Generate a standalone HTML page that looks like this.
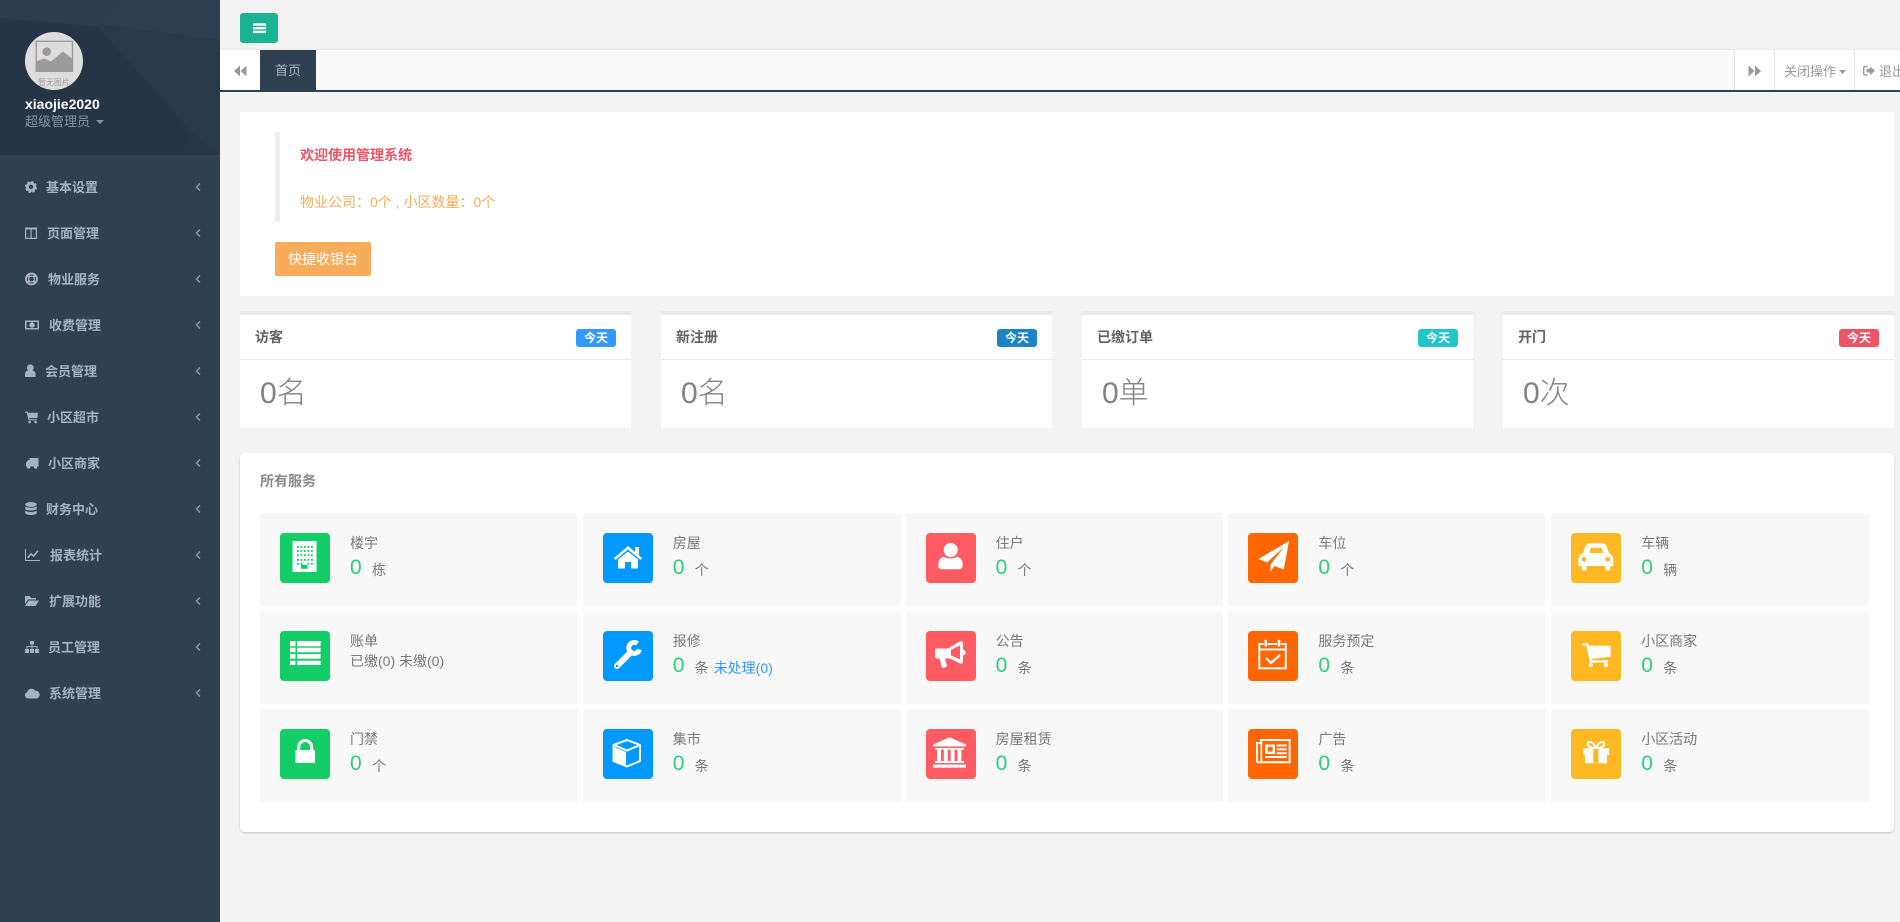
<!DOCTYPE html>
<html lang="zh"><head><meta charset="utf-8"><title>首页</title>
<style>
*{box-sizing:border-box}
html,body{margin:0;padding:0;width:1900px;height:922px;overflow:hidden;background:#f3f3f4;font-family:"Liberation Sans","Noto Sans CJK SC",sans-serif;font-size:14px;color:#676a6c}
.a{position:absolute;white-space:nowrap}
.t{line-height:20px;height:20px}
#side{position:absolute;left:0;top:0;width:220px;height:922px;background:#2f4050}
.n{position:absolute;left:0;width:220px;height:46px}
.n svg.i{position:absolute;left:25px;top:15px;fill:#a7b1c2;overflow:visible}
.n span{position:absolute;top:14px;line-height:20px;font-size:13px;font-weight:700;color:#a7b1c2}
.n svg.c{position:absolute;left:195px;top:19px}
.card{position:absolute;top:311px;width:391px;height:117px;background:#fff;border-top:4px solid #e7eaec}
.card .h{position:absolute;left:0;right:0;top:0;height:45px;border-bottom:1px solid #e7eaec}
.card b{position:absolute;left:15px;top:12px;line-height:20px;font-size:14px;color:#5f6264}
.card i{position:absolute;right:15px;top:14px;width:40px;height:18px;border-radius:3px;color:#fff;font:700 12px/18px "Liberation Sans","Noto Sans CJK SC",sans-serif;text-align:center}
.card u{position:absolute;left:20px;top:59px;text-decoration:none;font-size:30px;line-height:40px;font-weight:300;color:#808284}
#grid{position:absolute;left:260px;top:513px;width:1609px;display:grid;grid-template-columns:repeat(5,317.8px);grid-auto-rows:93px;gap:5px}
.it{position:relative;background:#f8f8f8}
.it svg{position:absolute;left:20px;top:20px;width:50px;height:50px;border-radius:4px}
.it .l{position:absolute;left:90px;top:20px;line-height:20px;color:#777;white-space:nowrap}
.it .v{position:absolute;left:90px;top:42px;line-height:26px;font-size:21px;color:#2ccf78}
.it .u{position:absolute;left:112px;top:47px;line-height:20px;color:#777;white-space:nowrap}
.g{background:#13ce66}.b{background:#09f}.r{background:#ff5b62}.o{background:#f60}.y{background:#ffb822}
</style></head><body>

<div id="side">
<svg class="a" style="left:0;top:0" width="220" height="155" viewBox="0 0 220 155">
<rect width="220" height="155" fill="#263646"/>
<polygon points="0,0 120,0 98,27 0,18" fill="#2a3c4d"/>
<polygon points="120,0 220,0 220,130 196,135 98,27" fill="#283a4a"/>
<polygon points="120,0 220,0 220,40 100,24" fill="#2b3d4e"/>
<polygon points="220,110 196,135 220,155" fill="#283a4a"/>
<polygon points="0,18 98,27 190,135 180,155 0,155" fill="#263545"/>
</svg>
<svg class="a" style="left:25px;top:32px" width="58" height="58" viewBox="0 0 58 58">
<circle cx="29" cy="29" r="29" fill="#dedcdc"/>
<rect x="11.2" y="9.3" width="36.3" height="30" fill="none" stroke="#9b9b9b" stroke-width="1.4"/>
<circle cx="21.7" cy="19.7" r="4.3" fill="#9b9b9b"/>
<polygon points="11,29.5 19,26.5 26,29.5 38,19.5 48,27.5 48,39.7 11,39.7" fill="#9b9b9b"/>
<text x="29" y="53" text-anchor="middle" font-size="7.8" fill="#9f9f9f" font-family="Liberation Sans,Noto Sans CJK SC,sans-serif">暂无图片</text>
</svg>
<div class="a t" style="left:25px;top:94px;color:#fff;font-weight:700;font-size:14px">xiaojie2020</div>
<div class="a t" style="left:25px;top:112px;color:#8095a8;font-size:13px">超级管理员</div>
<svg class="a" style="left:96px;top:120px" width="8" height="5"><polygon points="0,0 8,0 4,4" fill="#8095a8"/></svg>

<div class="n" style="top:164px"><svg class="i" width="16" height="16"><circle cx="6" cy="8" r="3.6" fill="none" stroke="#a7b1c2" stroke-width="2.8"/><circle cx="6" cy="8" r="5.2" fill="none" stroke="#a7b1c2" stroke-width="1.6" stroke-dasharray="2.4 1.7"/></svg><span style="left:46px">基本设置</span><svg class="c" width="6" height="8"><polyline points="5,.5 1.5,4 5,7.5" fill="none" stroke="#8a9bb0" stroke-width="1.4"/></svg></div>

<div class="n" style="top:210px"><svg class="i" width="16" height="16"><path d="M0 2.5H12V14H0ZM1.2 4.5V12.8H5.4V4.5ZM6.6 4.5V12.8H10.8V4.5Z" fill-rule="evenodd"/></svg><span style="left:47px">页面管理</span><svg class="c" width="6" height="8"><polyline points="5,.5 1.5,4 5,7.5" fill="none" stroke="#8a9bb0" stroke-width="1.4"/></svg></div>

<div class="n" style="top:256px"><svg class="i" width="16" height="16"><circle cx="6.5" cy="8" r="5.5" fill="none" stroke="#a7b1c2" stroke-width="1.9"/><circle cx="6.5" cy="8" r="2.9" fill="none" stroke="#a7b1c2" stroke-width="1.2"/><path d="M2.8 4.3L4.6 6.1M10.2 4.3L8.4 6.1M2.8 11.7L4.6 9.9M10.2 11.7L8.4 9.9" stroke="#a7b1c2" stroke-width="2.4"/></svg><span style="left:48px">物业服务</span><svg class="c" width="6" height="8"><polyline points="5,.5 1.5,4 5,7.5" fill="none" stroke="#8a9bb0" stroke-width="1.4"/></svg></div>

<div class="n" style="top:302px"><svg class="i" width="16" height="16"><path d="M0 3.5H14V12.5H0ZM1.5 5V11H12.5V5ZM7 5.3A2.7 2.7 0 1 1 7 10.7A2.7 2.7 0 1 1 7 5.3Z" fill-rule="evenodd"/><rect x="6.4" y="6.5" width="1.2" height="3"/></svg><span style="left:49px">收费管理</span><svg class="c" width="6" height="8"><polyline points="5,.5 1.5,4 5,7.5" fill="none" stroke="#8a9bb0" stroke-width="1.4"/></svg></div>

<div class="n" style="top:348px"><svg class="i" width="16" height="16"><circle cx="5.3" cy="4.8" r="3.4"/><path d="M0 14V11.5C0 9 1.5 7.6 3 7.6H7.6C9 7.6 10.6 9 10.6 11.5V14Z"/></svg><span style="left:45px">会员管理</span><svg class="c" width="6" height="8"><polyline points="5,.5 1.5,4 5,7.5" fill="none" stroke="#8a9bb0" stroke-width="1.4"/></svg></div>

<div class="n" style="top:394px"><svg class="i" width="16" height="16"><path d="M0 2.5H2.6L3 3.8H13L12.4 9H4.2L4.5 10.2H11.8V11.4H3.5L1.8 3.7H0Z"/><circle cx="4.6" cy="13" r="1.3"/><circle cx="10.6" cy="13" r="1.3"/></svg><span style="left:47px">小区超市</span><svg class="c" width="6" height="8"><polyline points="5,.5 1.5,4 5,7.5" fill="none" stroke="#8a9bb0" stroke-width="1.4"/></svg></div>

<div class="n" style="top:440px"><svg class="i" width="16" height="16"><path d="M4.5 3H13.5V11.5H4.5H1V8L3 5H4.5Z"/><circle cx="3.6" cy="12" r="1.7"/><circle cx="10.6" cy="12" r="1.7"/></svg><span style="left:48px">小区商家</span><svg class="c" width="6" height="8"><polyline points="5,.5 1.5,4 5,7.5" fill="none" stroke="#8a9bb0" stroke-width="1.4"/></svg></div>

<div class="n" style="top:486px"><svg class="i" width="16" height="16"><ellipse cx="6" cy="3.5" rx="5.8" ry="2.4"/><path d="M.2 5.2C1.5 7.2 10.5 7.2 11.8 5.2V8C10.5 10 1.5 10 .2 8Z"/><path d="M.2 9.5C1.5 11.5 10.5 11.5 11.8 9.5V12.3C10.5 14.6 1.5 14.6 .2 12.3Z"/></svg><span style="left:46px">财务中心</span><svg class="c" width="6" height="8"><polyline points="5,.5 1.5,4 5,7.5" fill="none" stroke="#8a9bb0" stroke-width="1.4"/></svg></div>

<div class="n" style="top:532px"><svg class="i" width="16" height="16"><path d="M0 2H1V13H15V14H0Z"/><polyline points="2.5,11 6,7 8.5,9 13,3.8" fill="none" stroke="#a7b1c2" stroke-width="1.6"/></svg><span style="left:50px">报表统计</span><svg class="c" width="6" height="8"><polyline points="5,.5 1.5,4 5,7.5" fill="none" stroke="#8a9bb0" stroke-width="1.4"/></svg></div>

<div class="n" style="top:578px"><svg class="i" width="16" height="16"><path d="M0 3H4.5L6 5H11V6.5H3L0 11Z"/><path d="M3.6 7.5H14L10.6 13H0Z"/></svg><span style="left:49px">扩展功能</span><svg class="c" width="6" height="8"><polyline points="5,.5 1.5,4 5,7.5" fill="none" stroke="#8a9bb0" stroke-width="1.4"/></svg></div>

<div class="n" style="top:624px"><svg class="i" width="16" height="16"><rect x="5" y="2" width="4" height="3.5"/><rect x="0" y="10" width="4" height="4"/><rect x="5" y="10" width="4" height="4"/><rect x="10" y="10" width="4" height="4"/><path d="M6.5 5H7.5V7H12.5V10H11.5V8H7.5V10H6.5V8H2.5V10H1.5V7H6.5Z"/></svg><span style="left:48px">员工管理</span><svg class="c" width="6" height="8"><polyline points="5,.5 1.5,4 5,7.5" fill="none" stroke="#8a9bb0" stroke-width="1.4"/></svg></div>

<div class="n" style="top:670px"><svg class="i" width="16" height="16"><path d="M3 13.5A3.2 3.2 0 0 1 2.3 7.2A4.3 4.3 0 0 1 10.2 5.8A3.9 3.9 0 0 1 11.5 13.5Z"/></svg><span style="left:49px">系统管理</span><svg class="c" width="6" height="8"><polyline points="5,.5 1.5,4 5,7.5" fill="none" stroke="#8a9bb0" stroke-width="1.4"/></svg></div>
</div>

<!-- top -->
<div class="a" style="left:240px;top:13px;width:38px;height:30px;background:#1ab394;border-radius:3px"></div>
<svg class="a" style="left:253px;top:23px" width="13" height="11"><rect y=".3" width="13" height="2.4" fill="#fff"/><rect y="4" width="13" height="2.4" fill="#fff"/><rect y="7.7" width="13" height="2.4" fill="#fff"/></svg>

<div class="a" style="left:220px;top:49px;width:1680px;height:1px;background:#e7e7e7"></div>
<div class="a" style="left:220px;top:50px;width:1680px;height:40px;background:#fafafa"></div>
<div class="a" style="left:220px;top:90px;width:1680px;height:2px;background:#2f4050"></div>
<div class="a" style="left:220px;top:50px;width:40px;height:40px;background:#fff"></div>
<svg class="a" style="left:234px;top:65px" width="13" height="12"><polygon points="6,.5 6,11.5 0,6" fill="#999"/><polygon points="12.5,.5 12.5,11.5 6.5,6" fill="#999"/></svg>
<div class="a t" style="left:260px;top:50px;width:56px;height:40px;background:#2f4050;color:#a7b1c2;font-size:13px;line-height:41px;text-align:center">首页</div>

<div class="a" style="left:1734px;top:50px;width:166px;height:40px;background:#fff"></div>
<div class="a" style="left:1734px;top:50px;width:1px;height:40px;background:#e7e7e7"></div>
<div class="a" style="left:1774px;top:50px;width:1px;height:40px;background:#e7e7e7"></div>
<div class="a" style="left:1854px;top:50px;width:1px;height:40px;background:#e7e7e7"></div>
<svg class="a" style="left:1748px;top:65px" width="13" height="12"><polygon points=".5,.5 .5,11.5 6.5,6" fill="#999"/><polygon points="7,.5 7,11.5 13,6" fill="#999"/></svg>
<div class="a t" style="left:1784px;top:62px;color:#999;font-size:13px">关闭操作</div>
<svg class="a" style="left:1839px;top:70px" width="8" height="5"><polygon points="0,0 7,0 3.5,4" fill="#999"/></svg>
<svg class="a" style="left:1863px;top:65px" width="12" height="12"><path d="M4.5 1.5H2Q.7 1.5 .7 3V8.5Q.7 10 2 10H4.5" fill="none" stroke="#999" stroke-width="1.4"/><path d="M3.5 4H7V1.5L12 5.8L7 10V7.5H3.5Z" fill="#999"/></svg>
<div class="a t" style="left:1879px;top:62px;color:#999;font-size:13px;width:21px;overflow:hidden">退出</div>

<!-- welcome -->
<div class="a" style="left:240px;top:112px;width:1654px;height:184px;background:#fff"></div>
<div class="a" style="left:275px;top:132px;width:5px;height:90px;background:#eee"></div>
<div class="a t" style="left:300px;top:145px;color:#ed5565;font-weight:700">欢迎使用管理系统</div>
<div class="a t" style="left:300px;top:192px;color:#f8ac59">物业公司：0个 , 小区数量：0个</div>
<div class="a" style="left:275px;top:242px;width:96px;height:34px;background:#f8ac59;border-radius:2px;color:#fff;text-align:center;line-height:35px">快捷收银台</div>

<!-- stat cards -->
<div class="card" style="left:240px"><div class="h"></div><b>访客</b><i style="background:#39f">今天</i><u>0名</u></div>
<div class="card" style="left:661px"><div class="h"></div><b>新注册</b><i style="background:#1c84c6">今天</i><u>0名</u></div>
<div class="card" style="left:1082px"><div class="h"></div><b>已缴订单</b><i style="background:#23c6c8">今天</i><u>0单</u></div>
<div class="card" style="left:1503px"><div class="h"></div><b>开门</b><i style="background:#ed5565">今天</i><u>0次</u></div>

<!-- services -->
<div class="a" style="left:240px;top:453px;width:1654px;height:379px;background:#fff;border-radius:5px;box-shadow:0 1px 2px rgba(0,0,0,.2)"></div>
<div class="a t" style="left:260px;top:471px;font-weight:700;color:#8a8a8a">所有服务</div>

<div id="grid">

<div class="it"><svg class="g" viewBox="0 0 50 50"><rect x="12.5" y="8" width="24" height="31" fill="#fff"/><g fill="#13ce66"><rect x="17" y="13" width="1.8" height="1.8"/><rect x="20.5" y="13" width="1.8" height="1.8"/><rect x="24" y="13" width="1.8" height="1.8"/><rect x="27.5" y="13" width="1.8" height="1.8"/><rect x="31" y="13" width="1.8" height="1.8"/><rect x="17" y="17" width="1.8" height="1.8"/><rect x="20.5" y="17" width="1.8" height="1.8"/><rect x="24" y="17" width="1.8" height="1.8"/><rect x="27.5" y="17" width="1.8" height="1.8"/><rect x="31" y="17" width="1.8" height="1.8"/><rect x="17" y="21.3" width="1.8" height="1.8"/><rect x="20.5" y="21.3" width="1.8" height="1.8"/><rect x="24" y="21.3" width="1.8" height="1.8"/><rect x="27.5" y="21.3" width="1.8" height="1.8"/><rect x="31" y="21.3" width="1.8" height="1.8"/><rect x="17" y="26" width="1.8" height="1.8"/><rect x="20.5" y="26" width="1.8" height="1.8"/><rect x="24" y="26" width="1.8" height="1.8"/><rect x="27.5" y="26" width="1.8" height="1.8"/><rect x="31" y="26" width="1.8" height="1.8"/><rect x="17" y="30" width="1.8" height="1.8"/><rect x="20.5" y="30" width="1.8" height="1.8"/><rect x="27.5" y="30" width="1.8" height="1.8"/><rect x="31" y="30" width="1.8" height="1.8"/><rect x="21" y="32" width="6.5" height="3.8"/></g></svg><div class="l">楼宇</div><div class="v">0</div><div class="u">栋</div></div>

<div class="it"><svg class="b" viewBox="0 0 50 50"><path d="M11 25L25 13L32 19V14H36V22.5L39 25L37.5 27L25 16.5L12.5 27Z" fill="#fff"/><path d="M15 26.5L25 18.5L35 26.5V35.5H28V29H22V35.5H15Z" fill="#fff"/></svg><div class="l">房屋</div><div class="v">0</div><div class="u">个</div></div>

<div class="it"><svg class="r" viewBox="0 0 50 50"><circle cx="24.7" cy="17" r="7" fill="#fff"/><path d="M12.3 32C12.3 27 15 24 18 23.7C21 26 28 26 31 23.7C34.5 24 36.7 27 36.7 32Q36.7 36.3 33 36.3H16Q12.3 36.3 12.3 32Z" fill="#fff"/></svg><div class="l">住户</div><div class="v">0</div><div class="u">个</div></div>

<div class="it"><svg class="o" viewBox="0 0 50 50"><path d="M41 8L10.5 26L19 29.5L36 14L22.5 31.5V38.5L26.5 33L35.8 36.5Z" fill="#fff"/></svg><div class="l">车位</div><div class="v">0</div><div class="u">个</div></div>

<div class="it"><svg class="y" viewBox="0 0 50 50"><path d="M12 20L14.5 13Q15.5 10.3 19 10.3H31Q34.5 10.3 35.5 13L38 20Q42.3 22 42.3 27V33H39.5V35Q39.5 37.7 37 37.7Q34.3 37.7 34.3 35V33H15.7V35Q15.7 37.7 13 37.7Q10.5 37.7 10.5 35V33H7.3V27Q7.3 22 12 20Z" fill="#fff"/><path d="M18.3 20L19.7 15H30.7L32.3 20Z" fill="#ffb822"/><circle cx="13" cy="26.3" r="2.4" fill="#ffb822"/><circle cx="36.7" cy="26.3" r="2.4" fill="#ffb822"/></svg><div class="l">车辆</div><div class="v">0</div><div class="u">辆</div></div>

<div class="it"><svg class="g" viewBox="0 0 50 50"><g fill="#fff"><rect x="10" y="10" width="5.5" height="5.3"/><rect x="17" y="10" width="23.6" height="5.3"/><rect x="10" y="16.7" width="5.5" height="4.6"/><rect x="17" y="16.7" width="23.6" height="4.6"/><rect x="10" y="23" width="5.5" height="4.7"/><rect x="17" y="23" width="23.6" height="4.7"/><rect x="10" y="29.7" width="5.5" height="4.3"/><rect x="17" y="29.7" width="23.6" height="4.3"/></g></svg><div class="l">账单</div><div class="l" style="top:40px">已缴(0) 未缴(0)</div></div>

<div class="it"><svg class="b" viewBox="0 0 50 50"><path d="M14 35L27.5 21.5" stroke="#fff" stroke-width="6" stroke-linecap="round"/><path d="M34.5 12.5A5.5 5.5 0 1 0 36.5 18.5" fill="none" stroke="#fff" stroke-width="5"/><circle cx="14" cy="35" r="1.2" fill="#09f"/></svg><div class="l">报修</div><div class="v">0</div><div class="u">条 <span style="color:#39f;margin-left:1px">未处理(0)</span></div></div>

<div class="it"><svg class="r" viewBox="0 0 50 50"><path d="M9 17.5H22L34 10.3Q37 10.3 37 13V18.5Q39.7 19.5 39.7 21.5Q39.7 23.5 37 24.5V30Q37 33 34 32.5L24 27.5H19L21 35L19 36.7H16L13.5 27.5H10.5Q9 27 9 25Z" fill="#fff"/><path d="M25 18.8L34 14.5V28.5L25 24.5Z" fill="#ff5b62"/></svg><div class="l">公告</div><div class="v">0</div><div class="u">条</div></div>

<div class="it"><svg class="o" viewBox="0 0 50 50"><rect x="11.3" y="13" width="26.5" height="24.3" fill="none" stroke="#fff" stroke-width="2"/><rect x="11" y="17.5" width="27" height="2" fill="#fff"/><rect x="16.2" y="8.3" width="3.2" height="7.5" rx="1.6" fill="#fff" stroke="#f60" stroke-width=".6"/><rect x="29.4" y="8.3" width="3.2" height="7.5" rx="1.6" fill="#fff" stroke="#f60" stroke-width=".6"/><polyline points="18,27 23,32 32,24" fill="none" stroke="#fff" stroke-width="2.4"/></svg><div class="l">服务预定</div><div class="v">0</div><div class="u">条</div></div>

<div class="it"><svg class="y" viewBox="0 0 50 50"><path d="M11.3 12.3H17L18 14.7H39.7V25.7L20.5 28L21 29.3H37V31.6H19L15.3 14.5H11.3Z" fill="#fff"/><circle cx="19.7" cy="34" r="2.2" fill="#fff"/><circle cx="35" cy="34" r="2.2" fill="#fff"/></svg><div class="l">小区商家</div><div class="v">0</div><div class="u">条</div></div>

<div class="it"><svg class="g" viewBox="0 0 50 50"><path d="M18.7 21V18A6.5 6.5 0 0 1 31.7 18V21" fill="none" stroke="#fff" stroke-width="3"/><rect x="15.5" y="21" width="19.5" height="13" rx="1" fill="#fff"/></svg><div class="l">门禁</div><div class="v">0</div><div class="u">个</div></div>

<div class="it"><svg class="b" viewBox="0 0 50 50"><path d="M24 11L37 16V32L24 37.5L10.5 32V16Z" fill="none" stroke="#fff" stroke-width="2" stroke-linejoin="round"/><path d="M11 16L24 21.5L37 16" fill="none" stroke="#fff" stroke-width="2"/><path d="M10.5 17.5L23 23V37L10.5 31.5Z" fill="#fff"/></svg><div class="l">集市</div><div class="v">0</div><div class="u">条</div></div>

<div class="it"><svg class="r" viewBox="0 0 50 50"><path d="M23.5 8.3L40 15.5V17.5H7V15.5Z" fill="#fff"/><rect x="9" y="19" width="29" height="1.6" fill="#fff"/><rect x="11" y="20" width="4" height="12" fill="#fff"/><rect x="17.8" y="20" width="4" height="12" fill="#fff"/><rect x="24.6" y="20" width="4" height="12" fill="#fff"/><rect x="31.4" y="20" width="4" height="12" fill="#fff"/><rect x="9" y="32" width="29" height="2" fill="#fff"/><rect x="7" y="35.5" width="33" height="3.2" fill="#fff"/></svg><div class="l">房屋租赁</div><div class="v">0</div><div class="u">条</div></div>

<div class="it"><svg class="o" viewBox="0 0 50 50"><path d="M8 13H12V10H42.7V34.3H10Q8 34.3 8 32Z" fill="#fff"/><path d="M10 15H12.5V32.3H10.5L10 32ZM14.2 12H40.7V32.3H14.2Z" fill="#f60"/><g fill="#fff"><rect x="17" y="15.5" width="10" height="9.5"/><rect x="28.7" y="15.5" width="10" height="2"/><rect x="28.7" y="19.3" width="10" height="2"/><rect x="28.7" y="23.3" width="10" height="2"/><rect x="17" y="27" width="21.7" height="2"/></g><rect x="19.7" y="18" width="5" height="4.6" fill="#f60"/></svg><div class="l">广告</div><div class="v">0</div><div class="u">条</div></div>

<div class="it"><svg class="y" viewBox="0 0 50 50"><path d="M12 19.3H38V26H36V34.3H14V26H12Z" fill="#fff"/><path d="M25 19C20 19 16.7 17.5 16.7 15C16.7 12.5 21.5 11 25 19C28.5 11 33.3 12.5 33.3 15C33.3 17.5 30 19 25 19Z" fill="none" stroke="#fff" stroke-width="2"/><rect x="22.3" y="20" width="5" height="14.3" fill="#ffb822"/></svg><div class="l">小区活动</div><div class="v">0</div><div class="u">条</div></div>

</div>
</body></html>
